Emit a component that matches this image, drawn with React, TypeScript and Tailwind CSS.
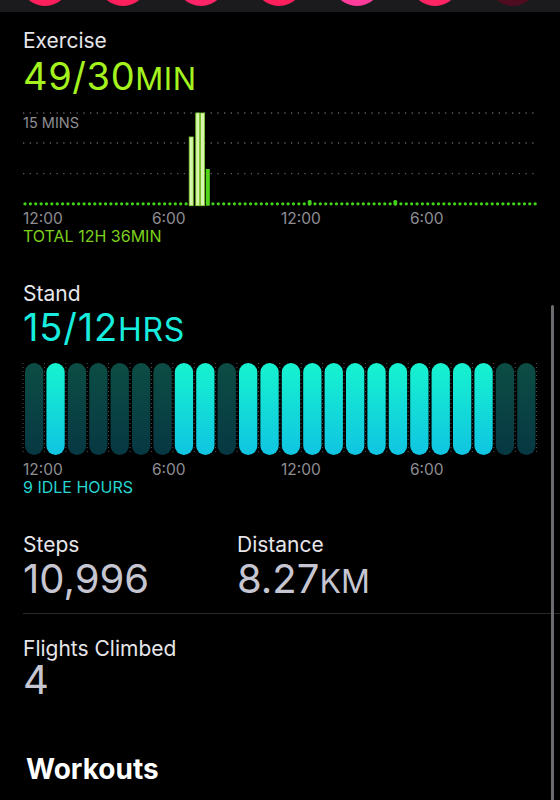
import React from "react";

const FONT = { fontFamily: "Inter, 'Noto Sans', sans-serif" };

const standOn = [
  false, true, false, false, false, false, false, true, true, false, true, true,
  true, true, true, true, true, true, true, true, true, true, false, false,
];

function ExerciseChart() {
  const dots = Array.from({ length: 96 }, (_, i) => 25 + i * 5.37).filter(
    (x) => x < 187 || x > 212
  );
  return (
    <svg width="560" height="103" viewBox="0 0 560 103" className="block">
      {[6, 36, 66.7].map((y) => (
        <line
          key={y}
          x1="23"
          x2="538"
          y1={y}
          y2={y}
          stroke="#5f5f62"
          strokeWidth="1.3"
          strokeDasharray="1.3 5.4"
        />
      ))}
      <text x="23" y="21" fontSize="14.5" fill="#8e8e93" style={FONT}>
        15 MINS
      </text>
      {dots.map((x) => (
        <circle key={x} cx={x} cy="96.8" r="1.65" fill="#44d21a" />
      ))}
      <rect x="307.8" y="93" width="3.8" height="5.6" rx="1.6" fill="#44d21a" />
      <rect x="393.4" y="93" width="3.8" height="5.6" rx="1.6" fill="#44d21a" />
      <rect x="189.2" y="30" width="4" height="68.7" fill="#d7f6ad" stroke="#86d42c" strokeWidth="0.8" />
      <rect x="195.8" y="6" width="3.8" height="92.7" fill="#d7f6ad" stroke="#86d42c" strokeWidth="0.8" />
      <rect x="200.6" y="6" width="3.8" height="92.7" fill="#d7f6ad" stroke="#86d42c" strokeWidth="0.8" />
      <rect x="205.8" y="62" width="4" height="36.7" fill="#52d41a" />
    </svg>
  );
}

function StandChart() {
  const pitch = 21.4;
  return (
    <svg width="560" height="100" viewBox="0 0 560 100" className="block">
      <defs>
        <linearGradient id="on" x1="0" y1="0" x2="0" y2="1">
          <stop offset="0" stopColor="#16f3cf" />
          <stop offset="1" stopColor="#10c4e2" />
        </linearGradient>
        <linearGradient id="off" x1="0" y1="0" x2="0" y2="1">
          <stop offset="0" stopColor="#0c4d44" />
          <stop offset="1" stopColor="#073843" />
        </linearGradient>
      </defs>
      {Array.from({ length: 25 }, (_, i) => (
        <line
          key={i}
          x1={23 + i * pitch}
          x2={23 + i * pitch}
          y1="4"
          y2="96"
          stroke="#56565a"
          strokeWidth="1"
          strokeDasharray="1 3"
        />
      ))}
      {standOn.map((on, i) => (
        <rect
          key={i}
          x={25 + i * pitch}
          y="4"
          width="18.3"
          height="92"
          rx="9.15"
          fill={on ? "url(#on)" : "url(#off)"}
        />
      ))}
    </svg>
  );
}

function TimeLabels() {
  return (
    <div className="ml-[23px] grid w-[516px] grid-cols-4 text-[15.5px] leading-[17px] text-[#8e8e93]">
      <span>12:00</span>
      <span>6:00</span>
      <span>12:00</span>
      <span>6:00</span>
    </div>
  );
}

export default function App() {
  const rings = ["#ff1f5c", "#ff1f5c", "#ff2468", "#ff1f5c", "#ff3b9c", "#ff2463", "#4d0c20"];
  return (
    <div className="relative h-[800px] w-[560px] overflow-hidden bg-black" style={FONT}>
      {/* top rings strip */}
      <div className="flex h-[12px] gap-[28px] overflow-hidden bg-[#1b1b1d] pl-[20px]">
        {rings.map((c, i) => (
          <div
            key={i}
            className="mt-[-44px] h-[50px] w-[50px] shrink-0 rounded-full"
            style={{ background: c }}
          />
        ))}
      </div>

      {/* Exercise */}
      <div className="mt-[16px] pl-[23px] text-[21px] leading-[25px] text-[#e6e6ea]">Exercise</div>
      <div className="mt-[3px] flex items-baseline pl-[23px] text-[#a4f21e]">
        <span className="text-[38px] leading-[40px] tracking-[0.6px]">49/30</span>
        <span className="text-[31px] leading-[40px] tracking-[0.6px]">MIN</span>
      </div>
      <div className="mt-[8px]">
        <ExerciseChart />
      </div>
      <TimeLabels />
      <div className="pl-[23px] text-[16px] leading-[18px] text-[#7dd01c]">TOTAL 12H 36MIN</div>

      {/* Stand */}
      <div className="mt-[36px] pl-[23px] text-[21px] leading-[25px] text-[#e6e6ea]">Stand</div>
      <div className="mt-[1px] flex items-baseline pl-[23px] text-[#18ecdf]">
        <span className="text-[38px] leading-[40px] tracking-[0.8px]">15/12</span>
        <span className="text-[32px] leading-[40px] tracking-[0.8px]">HRS</span>
      </div>
      <div className="mt-[9px]">
        <StandChart />
      </div>
      <div className="mt-[2px]">
        <TimeLabels />
      </div>
      <div className="pl-[23px] text-[16px] leading-[18px] text-[#25d5d0]">9 IDLE HOURS</div>

      {/* Steps / Distance */}
      <div className="mt-[36px] grid grid-cols-[214px_1fr] pl-[23px]">
        <div>
          <div className="text-[21px] leading-[25px] text-[#e6e6ea]">Steps</div>
          <div className="text-[40px] leading-[44px] text-[#c6c6d2]">10,996</div>
        </div>
        <div>
          <div className="text-[21px] leading-[25px] text-[#e6e6ea]">Distance</div>
          <div className="flex items-baseline text-[#c6c6d2]">
            <span className="text-[40px] leading-[44px]">8.27</span>
            <span className="text-[32px] leading-[44px]">KM</span>
          </div>
        </div>
      </div>
      <div className="ml-[23px] mt-[9px] h-px bg-[#2a2a2c]" />

      {/* Flights */}
      <div className="mt-[22px] pl-[23px] text-[21px] leading-[25px] text-[#e6e6ea]">Flights Climbed</div>
      <div className="mt-[-3px] pl-[23px] text-[40px] leading-[44px] text-[#c6c6d2]">4</div>

      {/* Workouts */}
      <div className="mt-[50px] pl-[26px] text-[28px] font-bold leading-[34px] text-white">Workouts</div>

      {/* scrollbar */}
      <div className="absolute right-[6px] top-[305px] h-[500px] w-[3px] rounded-full bg-[#6c6c70]" />
    </div>
  );
}
